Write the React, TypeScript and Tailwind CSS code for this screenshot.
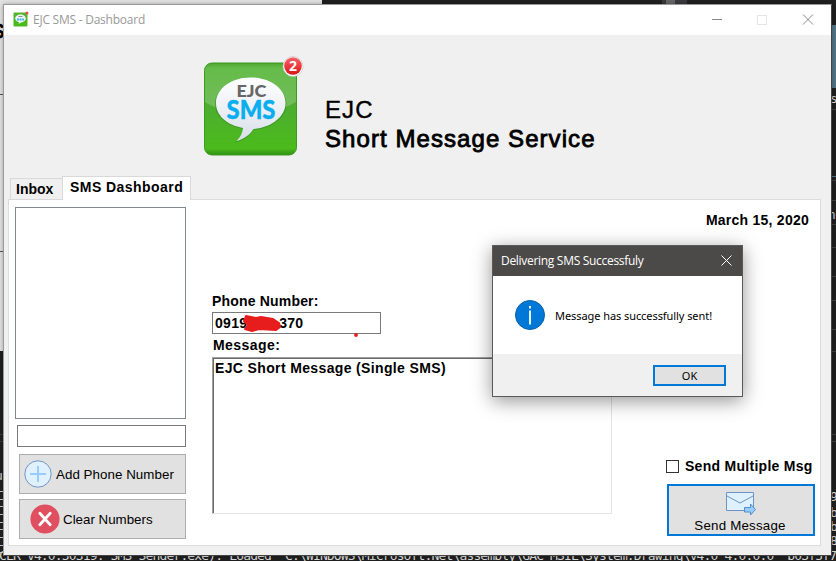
import React from 'react';

function AppIcon() {
  return (
    <svg className="h-[102px] w-[104px]" viewBox="0 0 104 102">
      <defs>
        <linearGradient id="green" x1="0" y1="0" x2="0" y2="1">
          <stop offset="0" stopColor="#4aa32c" />
          <stop offset="0.06" stopColor="#5cb83e" />
          <stop offset="0.45" stopColor="#4dad30" />
          <stop offset="0.93" stopColor="#4bbb1c" />
          <stop offset="1" stopColor="#2f8f12" />
        </linearGradient>
        <linearGradient id="gloss" x1="0" y1="0" x2="0" y2="1">
          <stop offset="0" stopColor="#fff" stopOpacity="0.04" />
          <stop offset="1" stopColor="#fff" stopOpacity="0.24" />
        </linearGradient>
        <linearGradient id="bubble" x1="0" y1="0" x2="0" y2="1">
          <stop offset="0" stopColor="#ffffff" />
          <stop offset="1" stopColor="#d9dfe9" />
        </linearGradient>
        <linearGradient id="badge" x1="0" y1="0" x2="0" y2="1">
          <stop offset="0" stopColor="#f5646a" />
          <stop offset="1" stopColor="#da1418" />
        </linearGradient>
      </defs>
      <rect x="1.5" y="7" width="92" height="92" rx="7.5" fill="url(#green)" stroke="#3d9a20" />
      <path d="M2 15a7 7 0 0 1 7-7h77a7 7 0 0 1 7 7v31Q75 57 47.500 57T2 46Z" fill="url(#gloss)" />
      <path d="M47.500 22.500c19.500 0 36 11 36 25.500 0 13.500-14.500 24.500-33 26-3.500 5.500-9 10-18 12.500 4-4 7-8.500 7.500-13.500C23.500 70 12 60.500 12 48c0-14.500 16-25.500 35.500-25.500Z" fill="#2d7d1a" opacity="0.5" />
      <path d="M47.500 21.500c19.500 0 35 11 35 25.500 0 13.500-13.500 24.500-32 26-3.500 5.500-9 10-17 12 4-4 6-8 6.500-13C23.500 69 13 59.500 13 47c0-14.500 15.500-25.500 34.500-25.500Z" fill="url(#bubble)" />
      <text x="33.500" y="40.500" textLength="30" lengthAdjust="spacingAndGlyphs" fontFamily="Lato, sans-serif" fontWeight="900" fontSize="17.500" fill="#666">EJC</text>
      <text x="23.500" y="62.500" textLength="49" lengthAdjust="spacingAndGlyphs" fontFamily="Lato, sans-serif" fontWeight="900" fontSize="27" fill="#08aeef" stroke="#08aeef" strokeWidth="0.400">SMS</text>
      <circle cx="90" cy="10.500" r="10" fill="#fff" stroke="#c5c5c5" strokeWidth="0.700" />
      <circle cx="90" cy="10" r="8.800" fill="url(#badge)" />
      <text x="90" y="15" textAnchor="middle" fontFamily="Open Sans, sans-serif" fontWeight="700" fontSize="14" fill="#fff">2</text>
    </svg>
  );
}

function SmallAppIcon() {
  return (
    <svg width="16" height="16" viewBox="0 0 16 16">
      <rect x="0.5" y="1.5" width="14" height="14" rx="1" fill="#51b62e" />
      <path d="M1 8h13v7H1Z" fill="#4bbb1c" />
      <path d="M7.500 3.500c3 0 5.300 1.700 5.300 4 0 2-2 3.600-4.700 3.900L5.500 13l.7-1.800C3.900 10.700 2.200 9.300 2.200 7.500c0-2.300 2.300-4 5.300-4Z" fill="#edf3f7" />
      <path d="M5.500 5.500h4" stroke="#8a9096" />
      <path d="M4 8.500h7" stroke="#3fb4e6" strokeWidth="2" strokeDasharray="2 .6" />
      <circle cx="14" cy="2" r="1.500" fill="#f0484c" />
    </svg>
  );
}

const semi = 'font-bold text-[14px]';

function Desktop() {
  const rules = [58, 109, 180, 200, 224, 247, 276, 300, 329, 351, 434, 441];
  return (
    <svg className="absolute inset-0" width="836" height="561">
      <rect width="836" height="561" fill="#202020" />
      <rect width="322" height="351" fill="#e4e4e4" />
      <text x="-9" y="38" fontFamily="Liberation Sans, sans-serif" fontSize="20" fill="#000" stroke="#000">S</text>
      <path d="M0 94.500h3M0 251.500h3" stroke="#555" />
      <path d="M0 434.500h3M0 441.500h3" stroke="#3a3a3d" />
      <text x="-5" y="480" fontFamily="Liberation Mono, monospace" fontSize="13" fill="#ddd">u</text>
      {[491, 499, 506, 514, 522, 529, 537, 545, 552].map((y) => (
        <path key={y} d={`M0 ${y}.5h3`} stroke="#ccc" />
      ))}
      <path d="M662 0h25v4h-25z" fill="#3a3a3f" />
      <path d="M666 0h9v4h-9z" fill="#686868" />
      <text x="700" y="12.500" fontFamily="Noto Sans, sans-serif" fontSize="12.500" fill="#bbb">'Process Memory (MB)</text>
      {rules.map((y) => (
        <path key={y} d={`M831 ${y}.5h5`} stroke="#3f3f43" />
      ))}
      <path d="M831 25h5v63h-5z" fill="#527687" />
      <path d="M831 176.500h5" stroke="#527687" />
      <g fontSize="12" fill="#ddd">
        <text x="831" y="103" fontFamily="Noto Sans, sans-serif">s</text>
        <text x="828" y="219" fontFamily="Noto Sans, sans-serif">ne</text>
        <g fontFamily="DejaVu Sans Mono, monospace" fontSize="13">
          <text x="830" y="501">9</text>
          <text x="830" y="517">b</text>
          <text x="830" y="531">b</text>
          <text x="830" y="545">8</text>
          <text x="-1" y="560" textLength="838" xmlSpace="preserve">CLR v4.0.30319: SMS Sender.exe): Loaded 'C:\WINDOWS\Microsoft.Net\assembly\GAC_MSIL\System.Drawing\v4.0_4.0.0.0__b03f5f7</text>
        </g>
      </g>
    </svg>
  );
}

function TitleBar() {
  return (
    <div className="flex h-[30px] items-center bg-white pl-[9px] text-[#999]">
      <div className="mb-[2px]"><SmallAppIcon /></div>
      <span className="ml-[4px] font-['Open_Sans',sans-serif] text-[12px] leading-[30px] tracking-[-0.24px]">EJC SMS - Dashboard</span>
      <svg className="ml-auto mr-[16px]" width="103" height="12" fill="none" stroke="#888">
        <path d="M0 5.500h10" />
        <rect x="45.500" y="1.500" width="9" height="9" stroke="#e6e6e6" />
        <path d="M91 .5l10 10M101 .5l-10 10" />
      </svg>
    </div>
  );
}

function LeftColumn() {
  return (
    <div className="flex w-[171px] flex-col items-end">
      <div className="h-[212px] w-full border border-[#828790]" />
      <div className="mt-[6px] h-[22px] w-[169px] border border-[#7a7a7a]" />
      <button className="mt-[7px] flex h-[40px] w-[167px] items-center border border-[#adadad] bg-[#e1e1e1] pl-[4px] text-[13.33px] tracking-[0.05px]">
        <svg width="28" height="28" viewBox="0 0 28 28">
          <circle cx="14" cy="14" r="13.200" fill="#dff0fe" stroke="#7496c4" />
          <path d="M14 6v16M6 14h16" stroke="#98ccfd" strokeWidth="2" />
        </svg>
        <span className="ml-[4px] mt-[2px] whitespace-nowrap">Add Phone Number</span>
      </button>
      <button className="mt-[5px] flex h-[40px] w-[167px] items-center border border-[#adadad] bg-[#e1e1e1] pl-[10px] text-[13.33px]">
        <svg width="30" height="30" viewBox="0 0 30 30">
          <circle cx="15" cy="15" r="14.600" fill="#e04f5f" />
          <path d="M9.800 9.300l10.400 11.400M20.200 9.300L9.800 20.700" stroke="#fff" strokeWidth="2.800" strokeLinecap="round" />
        </svg>
        <span className="ml-[3px] mt-[2px] whitespace-nowrap">Clear Numbers</span>
      </button>
    </div>
  );
}

function MessageForm() {
  return (
    <div className={`ml-[26px] flex w-[400px] flex-col pt-[85px] leading-[18px] ${semi}`}>
      <label className="tracking-[0.18px]">Phone Number:</label>
      <div className="relative mt-[2px] flex h-[22px] w-[169px] items-center border border-[#7a7a7a] pl-[2px]">
        <span className="mb-px tracking-[0.3px]">0919</span>
        <span className="mb-px ml-[32px] tracking-[0.2px]">370</span>
        <svg className="absolute left-[30px] top-[2px]" width="116" height="24">
          <path d="M3 1l10 2 5-1 12 2 6 4 1 4-4 3-17-1-7 2-7-2 3-4-4-4Z" fill="#e71d1d" stroke="#e71d1d" strokeWidth="2" strokeLinejoin="round" />
          <circle cx="113" cy="20" r="1.900" fill="#e71d1d" />
        </svg>
      </div>
      <label className="mt-[2px] pl-[1px] tracking-[0.45px]">Message:</label>
      <div className="mt-[3px] h-[157px] border border-b-[#e3e3e3] border-l-[#a0a0a0] border-r-[#e3e3e3] border-t-[#a0a0a0]">
        <div className="h-full border-l border-t border-[#696969] pl-px tracking-[0.36px]">EJC Short Message (Single SMS)</div>
      </div>
    </div>
  );
}

function SendColumn() {
  return (
    <div className="ml-auto flex w-[149px] flex-col items-end">
      <span className={`mt-[4px] whitespace-nowrap pr-[6px] leading-[18px] ${semi} tracking-[0.25px]`}>March 15, 2020</span>
      <label className={`mt-[228px] flex w-full items-center whitespace-nowrap leading-[18px] ${semi} tracking-[0.28px]`}>
        <span className="mr-[6px] h-[13px] w-[13px] shrink-0 border border-[#333]" />
        <span className="mb-px">Send Multiple Msg</span>
      </label>
      <button className="mt-[8px] flex h-[52px] w-[148px] flex-col items-center border-2 border-[#0078d7] bg-[#e1e1e1] pt-[5px] text-[13.33px] tracking-[0.2px]">
        <svg width="30" height="24" viewBox="0 0 30 24" className="shrink-0">
          <path d="M.5 1.500h27v18H.5Z" fill="#dff0fe" stroke="#6b94c4" />
          <path d="M1 5l13 7 13-7" fill="none" stroke="#6b94c4" />
          <path d="M18.500 16.500h6v-3.500l5 5.500-5 5.500V21h-6Z" fill="#98ccfd" stroke="#4788c7" strokeWidth="0.900" />
        </svg>
        <span className="mt-px shrink-0 pr-[2px] leading-[20px]">Send Message</span>
      </button>
    </div>
  );
}

function Dialog() {
  return (
    <div className="absolute left-[492px] top-[245px] flex h-[152px] w-[251px] flex-col border border-[#5a5a5a] bg-white font-['Noto_Sans',sans-serif] shadow-[0_4px_18px_rgba(0,0,0,0.42)]">
      <div className="flex h-[30px] shrink-0 items-center justify-between bg-[#4c4a48] pl-[8px] pr-[10px] text-[12px] tracking-[-0.3px] text-white">
        <span className="font-['Open_Sans',sans-serif]">Delivering SMS Successfuly</span>
        <svg width="11" height="11" stroke="#fff" className="mb-[2px]"><path d="M.5 .5l10 10M10.500 .5l-10 10" /></svg>
      </div>
      <div className="flex h-[78px] items-center pl-[22px]">
        <svg width="30" height="30" viewBox="0 0 30 30">
          <circle cx="15" cy="15" r="14.500" fill="#0078d7" stroke="#0860a8" />
          <path d="M15 10.500v14M15 6v2.500" stroke="#fff" strokeWidth="1.800" />
        </svg>
        <span className="ml-[10px] mt-[2px] whitespace-nowrap text-[11px] tracking-[-0.07px]">Message has successfully sent!</span>
      </div>
      <div className="flex grow items-start justify-end bg-[#f0f0f0] pr-[16px] pt-[11px]">
        <button className="h-[21px] w-[73px] border-2 border-[#0078d7] bg-[#e1e1e1] text-[11px] leading-[17px]">OK</button>
      </div>
    </div>
  );
}

export default function App() {
  return (
    <div className="relative h-[561px] w-[836px] overflow-hidden font-['Liberation_Sans',Arial,sans-serif] text-black">
      <Desktop />
      <div className="absolute left-[3px] top-[4px] flex h-[552px] w-[829px] flex-col border border-[#9a9a9a] border-b-[#444] border-r-[#444] bg-[#f0f0f0] shadow-[0_0_5px_rgba(0,0,0,0.3)]">
        <TitleBar />
        <div className="flex h-[141px] shrink-0 pl-[199px] pt-[21px]">
          <AppIcon />
          <h1 className="ml-[18px] mt-[39px] text-[24px] leading-[29px] tracking-[1.07px]">
            <span className="block [-webkit-text-stroke:0.4px_black]">EJC</span>
            <span className="block whitespace-nowrap [-webkit-text-stroke:0.85px_black]">Short Message Service</span>
          </h1>
        </div>
        <div className={`z-10 -mb-px flex h-[24px] shrink-0 items-end pl-[6px] ${semi}`}>
          <div className="h-[22px] w-[52px] border border-r-0 border-[#d9d9d9] bg-[#f0f0f0] pl-[5px] leading-[21px]">Inbox</div>
          <div className="h-[24px] w-[129px] whitespace-nowrap border border-b-0 border-[#d9d9d9] bg-white pl-[7px] leading-[21px] tracking-[0.45px]">SMS Dashboard</div>
        </div>
        <div className="ml-[4px] flex h-[347px] w-[813px] shrink-0 border border-[#dcdcdc] bg-white pl-[6px] pr-[5px] pt-[7px]">
          <LeftColumn />
          <MessageForm />
          <SendColumn />
        </div>
      </div>
      <Dialog />
    </div>
  );
}
